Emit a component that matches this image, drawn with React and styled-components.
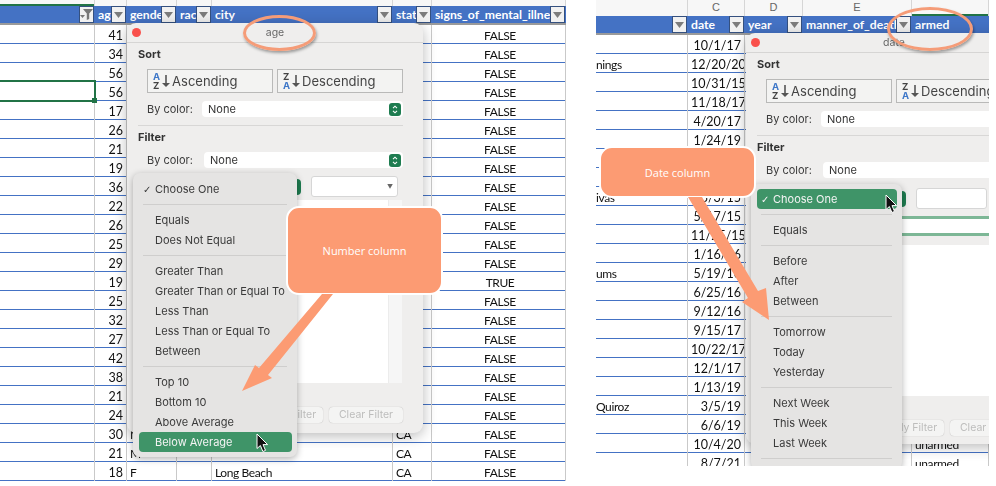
import React from 'react';
import styled, { createGlobalStyle } from 'styled-components';

const GlobalStyle = createGlobalStyle`
  html, body {
    margin: 0;
    padding: 0;
    background: #fff;
  }
`;

const Page = styled.div`
  width: 996px;
  height: 486px;
  display: flex;
  gap: 30px;
  overflow: hidden;
  background: #fff;
`;

const Shot = styled.div`
  position: relative;
  flex: none;
  width: ${(p) => p.$w}px;
  height: ${(p) => p.$h}px;
  overflow: hidden;
  filter: blur(0.3px);
`;

const ColumnLetters = styled.div`
  display: grid;
  grid-template-columns: ${(p) => p.$cols};
  height: ${(p) => p.$h}px;
  background: #f7f7f7;
`;

const Letter = styled.div`
  border-right: 1px solid #d6d6d6;
  text-align: center;
  font: 11px/14px 'Liberation Sans', sans-serif;
  color: #666;
  box-sizing: border-box;
  box-shadow: ${(p) => (p.$selected ? 'inset 0 -2px 0 #217346' : 'none')};
`;

const HeaderRow = styled.div`
  display: grid;
  grid-template-columns: ${(p) => p.$cols};
  height: 19px;
  box-sizing: border-box;
  background: #4472c4;
  border-bottom: 2px solid #9a9a9a;
`;

const HeaderCell = styled.div`
  display: flex;
  align-items: stretch;
  min-width: 0;
  padding-left: 3px;
  padding-right: 1px;
  overflow: hidden;
`;

const HeaderLabel = styled.span`
  flex: 1;
  min-width: 0;
  overflow: hidden;
  white-space: nowrap;
  font: 700 12.2px/17px Lato, sans-serif;
  color: #fff;
`;

const FilterButton = styled.span`
  flex: none;
  width: 15px;
  height: 17px;
  box-sizing: border-box;
  border: 1px solid #34507f;
  background: #f1f1f1;
  display: flex;
  align-items: center;
  justify-content: center;
`;

const DataRow = styled.div`
  display: grid;
  grid-template-columns: ${(p) => p.$cols};
  height: 19px;
  box-sizing: border-box;
  border-bottom: 1px solid #4472c4;
`;

const Cell = styled.div`
  box-sizing: border-box;
  padding: 1px 3px 0 ${(p) => (p.$flush ? 0 : p.$align === 'center' ? 6 : 3)}px;
  height: 19px;
  border-right: 1px solid #c9c9c9;
  font: ${(p) => (p.$align === 'right' ? 12.5 : 12)}px/19px Lato, sans-serif;
  letter-spacing: ${(p) => (p.$align === 'right' ? 0 : -0.4)}px;
  color: #111;
  white-space: nowrap;
  overflow: hidden;
  text-align: ${(p) => p.$align || 'left'};
`;

const SelectedCell = styled.div`
  position: absolute;
  left: -2px;
  top: 80px;
  width: 98px;
  height: 22px;
  box-sizing: border-box;
  border: 2px solid #217346;

  &::after {
    content: '';
    position: absolute;
    right: -3px;
    bottom: -3px;
    width: 5px;
    height: 5px;
    background: #217346;
  }
`;

const Dialog = styled.div`
  position: absolute;
  left: ${(p) => p.$left}px;
  top: ${(p) => p.$top}px;
  width: 296px;
  height: ${(p) => p.$h}px;
  box-sizing: border-box;
  display: flex;
  flex-direction: column;
  background: #efeeed;
  border-radius: 9px;
  box-shadow: 0 3px 14px rgba(0, 0, 0, 0.28);
  font-family: Inter, 'Liberation Sans', sans-serif;
  color: #3a3a3a;
`;

const TitleBar = styled.div`
  position: relative;
  flex: none;
  height: 20px;
  box-sizing: border-box;
  border-bottom: 1px solid #d6d5d4;
  text-align: center;
  font-size: 10.5px;
  line-height: 19px;
  color: #666;
`;

const CloseDot = styled.span`
  position: absolute;
  left: 5px;
  top: 5px;
  width: 9px;
  height: 9px;
  border-radius: 50%;
  background: #f9504b;
`;

const SectionTitle = styled.div`
  margin: 5px 0 0 11px;
  font-size: 11px;
  font-weight: 700;
  line-height: 13px;
  color: #333;
`;

const SortRow = styled.div`
  display: flex;
  gap: 4px;
  margin: 8px 0 0 20px;
`;

const SortButton = styled.div`
  flex: none;
  width: 126px;
  height: 24px;
  box-sizing: border-box;
  display: flex;
  align-items: center;
  gap: 2px;
  padding-left: 5px;
  border: 1px solid #b9b9b8;
  background: #f3f3f2;
  font-size: 13px;
  color: #444;
`;

const AzStack = styled.span`
  display: flex;
  flex-direction: column;
  font-size: 9.5px;
  font-weight: 700;
  line-height: 9.5px;
`;

const AzLetter = styled.span`
  color: ${(p) => (p.$blue ? '#3f78c8' : '#444')};
`;

const ColorRow = styled.div`
  display: flex;
  align-items: center;
  margin: 8px 0 0 20px;
  height: 16px;
  font-size: 11px;
`;

const ColorLabel = styled.span`
  flex: none;
  width: ${(p) => p.$w}px;
`;

const Select = styled.div`
  flex: none;
  width: ${(p) => p.$w}px;
  height: 16px;
  box-sizing: border-box;
  padding: 0 2px 0 6px;
  display: flex;
  align-items: center;
  justify-content: space-between;
  background: #fff;
  border-radius: 4px;
  color: #333;
`;

const Stepper = styled.span`
  flex: none;
  width: 12px;
  height: 13px;
  border-radius: 3px;
  background: #1e7c50;
  display: flex;
  align-items: center;
  justify-content: center;
`;

const Divider = styled.div`
  height: 1px;
  margin: 8px 20px 0 11px;
  background: #d8d7d6;
`;

const CriteriaRow = styled.div`
  display: flex;
  align-items: center;
  height: 21px;
  margin-top: ${(p) => p.$mt}px;
  padding-left: ${(p) => p.$pad}px;
`;

const ChoicePeek = styled.span`
  flex: none;
  width: 4px;
  height: 16px;
  margin-left: -4px;
  border-radius: 0 4px 4px 0;
  background: #1e7c50;
`;

const ValueInput = styled.div`
  flex: none;
  width: ${(p) => p.$w}px;
  height: 21px;
  margin-left: 10px;
  box-sizing: border-box;
  display: flex;
  justify-content: flex-end;
  align-items: center;
  padding-right: 4px;
  background: #fff;
  border: 1px solid #d6d6d6;
  border-radius: 3px;
  font-size: 6px;
  color: #666;
`;

const DateBand = styled.div`
  height: 20px;
  margin: 7px 0 0 20px;
  box-sizing: border-box;
  border-top: 3px solid #7db796;
  border-bottom: 3px solid #7db796;
  background: #fff;
`;

const ListBox = styled.div`
  flex: none;
  width: 255px;
  height: ${(p) => p.$h}px;
  margin: ${(p) => p.$mt}px 0 0 20px;
  display: flex;
  justify-content: flex-end;
  background: #fff;
`;

const ListTrack = styled.span`
  width: 13px;
  background: #f6f6f6;
  border-left: 1px solid #ececec;
`;

const Footer = styled.div`
  display: flex;
  justify-content: flex-end;
  gap: 6px;
  margin-top: 24px;
  padding-right: ${(p) => p.$pad}px;
`;

const GhostButton = styled.div`
  width: ${(p) => p.$w}px;
  height: 16px;
  border-radius: 4px;
  background: #f4f4f3;
  box-shadow: 0 0 1px rgba(0, 0, 0, 0.3);
  text-align: center;
  font-size: 10.5px;
  line-height: 16px;
  color: #bdbdbc;
  white-space: nowrap;
`;

const Menu = styled.div`
  position: absolute;
  left: ${(p) => p.$left}px;
  top: ${(p) => p.$top}px;
  width: ${(p) => p.$w}px;
  box-sizing: border-box;
  padding: ${(p) => p.$pad}px 5px 5px 6px;
  background: #e5e4e3;
  border-radius: 7px;
  box-shadow: 0 2px 7px rgba(0, 0, 0, 0.3);
`;

const MenuItem = styled.div`
  position: relative;
  height: 20px;
  padding-left: 16px;
  border-radius: 4px;
  font-size: 11px;
  line-height: 20px;
  white-space: nowrap;
  background: ${(p) => (p.$active ? '#3f9468' : 'transparent')};
  color: ${(p) => (p.$active ? '#f4f4f4' : '#3a3a3a')};
`;

const Check = styled.span`
  display: inline-block;
  width: 12px;
  margin-left: -12px;
  font-family: 'DejaVu Sans', sans-serif;
  font-size: 10px;
`;

const MenuRule = styled.div`
  height: 1px;
  margin: 5px 5px 5px 4px;
  background: #cfcecd;
`;

const Callout = styled.div`
  position: absolute;
  left: ${(p) => p.$left}px;
  top: ${(p) => p.$top}px;
  width: ${(p) => p.$w}px;
  height: ${(p) => p.$h}px;
  box-sizing: border-box;
  display: flex;
  align-items: center;
  justify-content: center;
  background: #fc9b73;
  border: 2px solid #fff;
  border-radius: 13px;
  font: 11px 'Open Sans', sans-serif;
  color: #fff;
`;

const Ring = styled.div`
  position: absolute;
  left: ${(p) => p.$left}px;
  top: ${(p) => p.$top}px;
  width: ${(p) => p.$w}px;
  height: ${(p) => p.$h}px;
  box-sizing: border-box;
  border: 3px solid #f59c78;
  border-radius: 50%;
  box-shadow: 1px 2px 3px rgba(0, 0, 0, 0.35);
`;

const ArrowLayer = styled.svg`
  position: absolute;
  left: 0;
  top: 0;
  pointer-events: none;
`;

const Pointer = styled.svg`
  position: absolute;
  left: ${(p) => p.$left}px;
  top: ${(p) => p.$top}px;
`;

const leftCols = '95px 32px 50px 35px 181px 39px 134px';
const rightCols = '92px 57px 58px 109px 77px';

const ages = [41, 34, 56, 56, 17, 26, 21, 19, 36, 22, 26, 25, 29, 19, 25, 32, 27, 42, 38, 21, 24, 30, 21, 18];

const leftExtras = {
  21: { gender: 'M', state: 'CA' },
  22: { gender: 'M', state: 'CA' },
  23: { gender: 'F', city: 'Long Beach', state: 'CA' },
};

const rightRows = [
  ['', '10/1/17'],
  ['nings', '12/20/20'],
  ['', '10/31/15'],
  ['', '11/18/17'],
  ['', '4/20/17'],
  ['', '1/24/19'],
  ['', ''],
  ['', ''],
  ['ivas', '3/3/15'],
  ['', '5/17/15'],
  ['', '11/25/15'],
  ['', '1/16/16'],
  ['ums', '5/19/16'],
  ['', '6/25/16'],
  ['', '9/12/16'],
  ['', '9/15/17'],
  ['', '10/22/17'],
  ['', '12/1/17'],
  ['', '1/13/19'],
  ['Quiroz', '3/5/19'],
  ['', '6/6/19'],
  ['', '10/4/20', '', '', 'unarmed'],
  ['', '8/7/21', '', '', 'unarmed'],
];

const numberMenu = [
  ['Choose One'],
  null,
  ['Equals'],
  ['Does Not Equal'],
  null,
  ['Greater Than'],
  ['Greater Than or Equal To'],
  ['Less Than'],
  ['Less Than or Equal To'],
  ['Between'],
  null,
  ['Top 10'],
  ['Bottom 10'],
  ['Above Average'],
  ['Below Average', 'active'],
];

const dateMenu = [
  ['Choose One', 'active'],
  null,
  ['Equals'],
  null,
  ['Before'],
  ['After'],
  ['Between'],
  null,
  ['Tomorrow'],
  ['Today'],
  ['Yesterday'],
  null,
  ['Next Week'],
  ['This Week'],
  ['Last Week'],
  null,
];

function Triangle() {
  return (
    <svg width="9" height="6" viewBox="0 0 9 6">
      <path d="M0 0h9L4.5 6z" fill="#7c7c7c" />
    </svg>
  );
}

function Funnel() {
  return (
    <svg width="13" height="11" viewBox="0 0 13 11">
      <path d="M3 0h10L9.2 4.4V10L6.8 11V4.4z" fill="#777" />
      <path d="M0 6h5L2.5 9z" fill="#777" />
    </svg>
  );
}

function Chevrons() {
  return (
    <svg width="6" height="9" viewBox="0 0 6 9" fill="none" stroke="#fff" strokeWidth="1.1">
      <path d="M1 3.2L3 1.2l2 2M1 5.8l2 2 2-2" />
    </svg>
  );
}

function DownArrow() {
  return (
    <svg width="8" height="12" viewBox="0 0 8 12">
      <path d="M3.2 0h1.6v8H8L4 12 0 8h3.2z" fill="#555" />
    </svg>
  );
}

function SortIcon({ top, bottom, blueTop }) {
  return (
    <>
      <AzStack>
        <AzLetter $blue={blueTop}>{top}</AzLetter>
        <AzLetter $blue={!blueTop}>{bottom}</AzLetter>
      </AzStack>
      <DownArrow />
    </>
  );
}

function MouseCursor({ left, top }) {
  return (
    <Pointer $left={left} $top={top} width="13" height="20" viewBox="0 0 13 20">
      <path d="M1 1v14.5l3.4-3 2.5 6 2.6-1.1-2.5-5.8h4.6z" fill="#111" stroke="#fff" strokeWidth="1" />
    </Pointer>
  );
}

function FilterDialog({ title, left, top, height, menu, menuProps, date, listHeight, listTop, footerPad }) {
  return (
    <Dialog $left={left} $top={top} $h={height}>
      <TitleBar>
        <CloseDot />
        {title}
      </TitleBar>
      <SectionTitle>Sort</SectionTitle>
      <SortRow>
        <SortButton>
          <SortIcon top="A" bottom="Z" blueTop />
          Ascending
        </SortButton>
        <SortButton>
          <SortIcon top="Z" bottom="A" />
          Descending
        </SortButton>
      </SortRow>
      <ColorRow>
        <ColorLabel $w={55}>By color:</ColorLabel>
        <Select $w={201}>
          None
          <Stepper>
            <Chevrons />
          </Stepper>
        </Select>
      </ColorRow>
      <Divider />
      <SectionTitle>Filter</SectionTitle>
      <ColorRow>
        <ColorLabel $w={57}>By color:</ColorLabel>
        <Select $w={199}>
          None
          <Stepper>
            <Chevrons />
          </Stepper>
        </Select>
      </ColorRow>
      <CriteriaRow $mt={date ? 10 : 8} $pad={date ? 160 : 174}>
        <ChoicePeek />
        <ValueInput $w={date ? 71 : 87}>{date ? '' : '▼'}</ValueInput>
      </CriteriaRow>
      {date && <DateBand />}
      <ListBox $h={listHeight} $mt={listTop}>
        <ListTrack />
      </ListBox>
      <Footer $pad={footerPad}>
        <GhostButton $w={70}>Apply Filter</GhostButton>
        <GhostButton $w={74}>Clear Filter</GhostButton>
      </Footer>
      <Menu {...menuProps}>
        {menu.map((item, i) =>
          item ? (
            <MenuItem key={i} $active={item[1] === 'active'}>
              {i === 0 && <Check>✓</Check>}
              {item[0]}
            </MenuItem>
          ) : (
            <MenuRule key={i} />
          )
        )}
      </Menu>
    </Dialog>
  );
}

export default function App() {
  return (
    <Page>
      <GlobalStyle />

      <Shot $w={566} $h={486}>
        <ColumnLetters $cols={leftCols} $h={6}>
          <Letter $selected />
          <Letter />
          <Letter />
          <Letter />
          <Letter />
          <Letter />
          <Letter />
        </ColumnLetters>
        <HeaderRow $cols={leftCols}>
          <HeaderCell>
            <HeaderLabel />
            <FilterButton>
              <Funnel />
            </FilterButton>
          </HeaderCell>
          {['age', 'gender', 'race', 'city', 'state', 'signs_of_mental_illness'].map((name) => (
            <HeaderCell key={name}>
              <HeaderLabel>{name}</HeaderLabel>
              <FilterButton>
                <Triangle />
              </FilterButton>
            </HeaderCell>
          ))}
        </HeaderRow>
        {ages.map((age, i) => {
          const extra = leftExtras[i] || {};
          return (
            <DataRow key={i} $cols={leftCols}>
              <Cell />
              <Cell $align="right">{age}</Cell>
              <Cell>{extra.gender}</Cell>
              <Cell />
              <Cell>{extra.city}</Cell>
              <Cell>{extra.state}</Cell>
              <Cell $align="center">{i === 13 ? 'TRUE' : 'FALSE'}</Cell>
            </DataRow>
          );
        })}
        <SelectedCell />
        <FilterDialog
          title="age"
          left={127}
          top={23}
          height={410}
          menu={numberMenu}
          menuProps={{ $left: 6, $top: 150, $w: 164, $pad: 6 }}
          listHeight={183}
          listTop={3}
          footerPad={20}
        />
        <MouseCursor left={256} top={433} />
        <Ring $left={243} $top={15} $w={73} $h={36} />
        <Callout $left={286} $top={206} $w={157} $h={89}>
          Number column
        </Callout>
        <ArrowLayer width="566" height="486">
          <path d="M322 294h11L268 375l4 3-30 13 13-26 4 3z" fill="#fc9b73" />
        </ArrowLayer>
      </Shot>

      <Shot $w={393} $h={466}>
        <ColumnLetters $cols={rightCols} $h={16}>
          <Letter />
          <Letter>C</Letter>
          <Letter>D</Letter>
          <Letter>E</Letter>
          <Letter $selected />
        </ColumnLetters>
        <HeaderRow $cols={rightCols}>
          <HeaderCell>
            <HeaderLabel />
            <FilterButton>
              <Triangle />
            </FilterButton>
          </HeaderCell>
          {['date', 'year', 'manner_of_death'].map((name) => (
            <HeaderCell key={name}>
              <HeaderLabel>{name}</HeaderLabel>
              <FilterButton>
                <Triangle />
              </FilterButton>
            </HeaderCell>
          ))}
          <HeaderCell>
            <HeaderLabel>armed</HeaderLabel>
          </HeaderCell>
        </HeaderRow>
        {rightRows.map((row, i) => (
          <DataRow key={i} $cols={rightCols}>
            <Cell $flush>{row[0]}</Cell>
            <Cell $align="right">{row[1]}</Cell>
            <Cell />
            <Cell />
            <Cell>{row[4]}</Cell>
          </DataRow>
        ))}
        <FilterDialog
          title="date"
          left={150}
          top={33}
          height={411}
          menu={dateMenu}
          menuProps={{ $left: 5, $top: 151, $w: 151, $pad: 5 }}
          date
          listHeight={151}
          listTop={9}
          footerPad={18}
        />
        <MouseCursor left={289} top={194} />
        <Ring $left={291} $top={7} $w={86} $h={44} />
        <Callout $left={3} $top={146} $w={157} $h={52}>
          Date column
        </Callout>
        <ArrowLayer width="393" height="466">
          <path d="M92 197h14l56 94 8-3 3 32-27-18 6-4z" fill="#fc9b73" />
        </ArrowLayer>
      </Shot>
    </Page>
  );
}
